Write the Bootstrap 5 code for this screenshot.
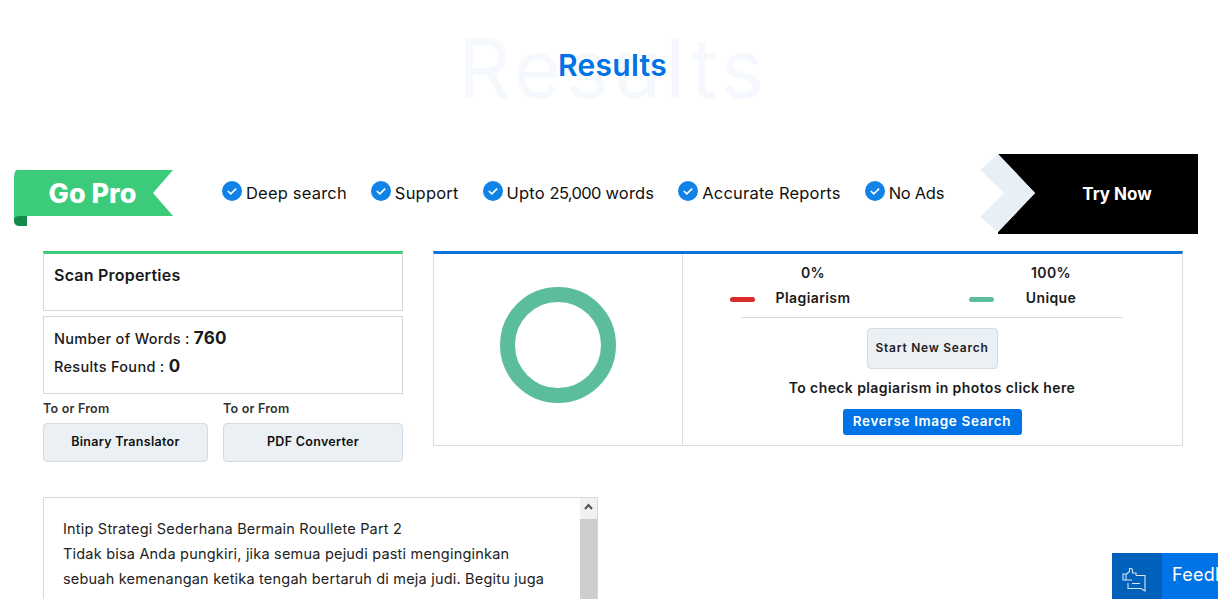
<!DOCTYPE html>
<html lang="en"><head><meta charset="utf-8"><title>Results</title>
<link href="https://cdn.jsdelivr.net/npm/bootstrap@5.3.0/dist/css/bootstrap.min.css" rel="stylesheet">
<style>
html,body{overflow:hidden;height:599px}
body{font-family:Inter,"Liberation Sans",sans-serif;color:#1a1a1a;background:#fff}
.hero{height:154px;position:relative;padding-left:7px}
.hero-title{font-size:30px;font-weight:600;color:#0073e6;padding-top:45px;position:relative;line-height:40px;letter-spacing:.3px}
.hero-ghost{position:absolute;left:8px;right:0;top:24px;font-size:82px;line-height:90px;color:#f5f9fd;letter-spacing:4.1px}
.strip{height:80px;margin-bottom:17px;padding-left:13px}
.ribbon{width:161px;height:56px;margin-top:16px;flex:none}
.perks{margin-left:48px;gap:24px;font-size:16.5px;letter-spacing:.19px;margin-top:-1px}
.perk{gap:4px;color:#111}
.perk svg{margin-top:-6px}
.nums{letter-spacing:-.7px}
.tight{letter-spacing:-.3px}
.try{width:218px;margin-left:auto;margin-right:20px;flex:none;position:relative}
.try svg{display:block}
.try-label{position:absolute;left:0;right:0;top:0;line-height:80px;text-align:center;padding-left:56px;color:#fff;font-weight:700;font-size:17px}
.main{padding-left:43px;width:1183px;gap:30px}
.leftc{width:360px;flex:none}
.box{border:1px solid #d4d6d8;padding:0 10px}
.scan{height:60px;border-top:3px solid #3ccb7a;font-size:16px;font-weight:600;padding-top:10px;line-height:22px;letter-spacing:.22px}
.stats{height:78px;margin-top:5px;font-size:14.5px;font-weight:500;padding-top:8px;letter-spacing:.3px}
.stats div{height:28px;line-height:26px}
.stats b{font-size:17px;font-weight:700}
.tf{font-size:12.5px;font-weight:600;color:#333;line-height:18px;margin-top:6px;margin-bottom:5px;letter-spacing:.2px}
.tool{display:block;background:#ebf0f5;border:1px solid #d3dbe5;border-radius:4px;height:39px;line-height:36px;text-align:center;font-size:12.5px;font-weight:600;color:#111;padding:0;letter-spacing:.3px}
.tool-a{width:180px}.tool-a .tool{width:165px}.tool-b{width:180px}
.card-res{border:1px solid #d8dde3;border-top:3px solid #0f72d8;height:195px;width:750px;flex:none}
.ring-cell{width:249px;flex:none;border-right:1px solid #d8dfe8;padding-bottom:9px}
.res-cell{font-size:14px;font-weight:600;text-align:center;padding:0 59px 0 58px;flex:1;letter-spacing:.4px}
.pct{padding-top:6px;height:64px;border-bottom:1px solid #d1d9e5;margin-bottom:10px}
.legend{width:144px;line-height:25px}
.dash{position:absolute;top:43px;width:25px;height:5px;border-radius:3px}
.dash-r{left:-11px;background:#d92b2b}.dash-g{left:228px;background:#5bbd9c}
.new-s{display:inline-block;background:#ebf0f5;border:1px solid #d3dbe5;border-radius:4px;width:131px;height:41px;line-height:36px;font-size:12px;font-weight:600;color:#222;padding:0 0 2px;letter-spacing:.75px}
.chk{margin-top:9px;line-height:20px}
.rev{display:inline-block;background:#0073e6;color:#fff;border:0;border-radius:3px;width:179px;height:26px;line-height:24px;font-size:13.5px;font-weight:600;padding:0 0 2px;margin-top:11px;letter-spacing:.65px}
.txt{width:555px;height:140px;margin:35px 0 0 43px;border:1px solid #d8d8d8;overflow:hidden}
.txt-body{padding:18px 19px;font-size:14.5px;line-height:25.2px;color:#222;letter-spacing:.2px;flex:1;min-width:0;white-space:nowrap}
.rail{width:17px;flex:none;background:#cdcdcd}
.rail-up{height:21px;background:#f1f1f1}
.rail-up svg{display:block}
.fb{position:fixed;right:0;bottom:0;width:106px;height:46px;background:#0073e6;color:#fff;overflow:hidden;font-size:18px;white-space:nowrap}
.fb-ic{width:50px;height:46px;background:#0060ba;flex:none}
.fb-ic svg{margin:8px 6px 0 0}
.fb-t{padding-left:10px;line-height:44px;letter-spacing:.3px}
</style></head><body>
<div class="hero text-center">
  <div class="hero-ghost">Results</div>
  <div class="hero-title">Results</div>
</div>
<div class="strip d-flex align-items-center">
  <svg class="ribbon align-self-start" viewBox="0 0 161 56"><path d="M1 10q0 -10 3 -10H160L140 23l20 23H14v10H7q-6 0 -6 -6z" fill="#3ccb7a"/><path d="M1 50q0-4 6-4h7v10H7q-6 0-6-6z" fill="#118a4b"/><text x="79.500" y="33" text-anchor="middle" font-family="Inter,sans-serif" font-weight="800" font-size="27" fill="#fff">Go Pro</text></svg>
  <div class="perks d-flex">
    <div class="perk d-flex align-items-center"><svg width="20" height="20" viewBox="0 0 20 20"><circle cx="10" cy="10" r="10" fill="#1283e6"/><path d="M5.8 10l3 2.8 5.4-5.2" fill="none" stroke="#fff" stroke-width="1.6"/></svg><span>Deep search</span></div>
    <div class="perk d-flex align-items-center"><svg width="20" height="20" viewBox="0 0 20 20"><circle cx="10" cy="10" r="10" fill="#1283e6"/><path d="M5.8 10l3 2.8 5.4-5.2" fill="none" stroke="#fff" stroke-width="1.6"/></svg><span>Support</span></div>
    <div class="perk d-flex align-items-center"><svg width="20" height="20" viewBox="0 0 20 20"><circle cx="10" cy="10" r="10" fill="#1283e6"/><path d="M5.8 10l3 2.8 5.4-5.2" fill="none" stroke="#fff" stroke-width="1.6"/></svg><span>Upto <span class="nums">25,000</span> words</span></div>
    <div class="perk d-flex align-items-center"><svg width="20" height="20" viewBox="0 0 20 20"><circle cx="10" cy="10" r="10" fill="#1283e6"/><path d="M5.8 10l3 2.8 5.4-5.2" fill="none" stroke="#fff" stroke-width="1.6"/></svg><span>Accurate Reports</span></div>
    <div class="perk d-flex align-items-center"><svg width="20" height="20" viewBox="0 0 20 20"><circle cx="10" cy="10" r="10" fill="#1283e6"/><path d="M5.8 10l3 2.8 5.4-5.2" fill="none" stroke="#fff" stroke-width="1.6"/></svg><span class="tight">No Ads</span></div>
  </div>
  <div class="try"><svg width="218" height="80" viewBox="0 0 218 80"><path d="M18 0H218V80H18V78L55 39z"/><path d="M0 16L18 0 55 39 18 78 0 63 24 39z" fill="#e9eff7"/></svg><div class="try-label">Try Now</div></div>
</div>
<div class="main d-flex">
  <div class="leftc">
    <div class="box scan">Scan Properties</div>
    <div class="box stats"><div>Number of Words : <b>760</b></div><div>Results Found : <b>0</b></div></div>
    <div class="d-flex">
      <div class="tool-a"><div class="tf">To or From</div><a class="tool text-decoration-none">Binary Translator</a></div>
      <div class="tool-b"><div class="tf">To or From</div><a class="tool text-decoration-none">PDF Converter</a></div>
    </div>
  </div>
  <div class="card-res d-flex">
    <div class="ring-cell d-flex align-items-center justify-content-center"><svg width="116" height="116" viewBox="0 0 116 116"><circle cx="58" cy="58" r="50.500" fill="none" stroke="#5bbd9c" stroke-width="15"/></svg></div>
    <div class="res-cell">
      <div class="pct d-flex justify-content-between position-relative">
        <div class="legend"><div>0%</div><div>Plagiarism</div></div>
        <div class="legend"><div>100%</div><div>Unique</div></div>
        <span class="dash dash-r"></span><span class="dash dash-g"></span>
      </div>
      <button class="new-s">Start New Search</button>
      <div class="chk">To check plagiarism in photos click here</div>
      <button class="rev">Reverse Image Search</button>
    </div>
  </div>
</div>
<div class="txt d-flex">
  <div class="txt-body">Intip Strategi Sederhana Bermain Roullete Part 2<br>Tidak bisa Anda pungkiri, jika semua pejudi pasti menginginkan<br>sebuah kemenangan ketika tengah bertaruh di meja judi. Begitu juga</div>
  <div class="rail"><div class="rail-up"><svg width="17" height="21" viewBox="0 0 17 21"><path d="M5 11l3.500-4 3.500 4" fill="none" stroke="#505050" stroke-width="2"/></svg></div></div>
</div>
<div class="fb d-flex"><div class="fb-ic d-flex align-items-center justify-content-center"><svg width="24" height="26" viewBox="0 0 24 26" fill="none" stroke="#d5e6f8" stroke-width="1.1"><path d="M1 7h3v6H1zM4 7.500L7.500 4.500V1.500q3-.5 3 2V6h3.500v2.500M4 13h6"/><path d="M14 8.500H23V24L19 21.500H6V16M10 16.500h8"/></svg></div><div class="fb-t">Feedback</div></div>
</body></html>
